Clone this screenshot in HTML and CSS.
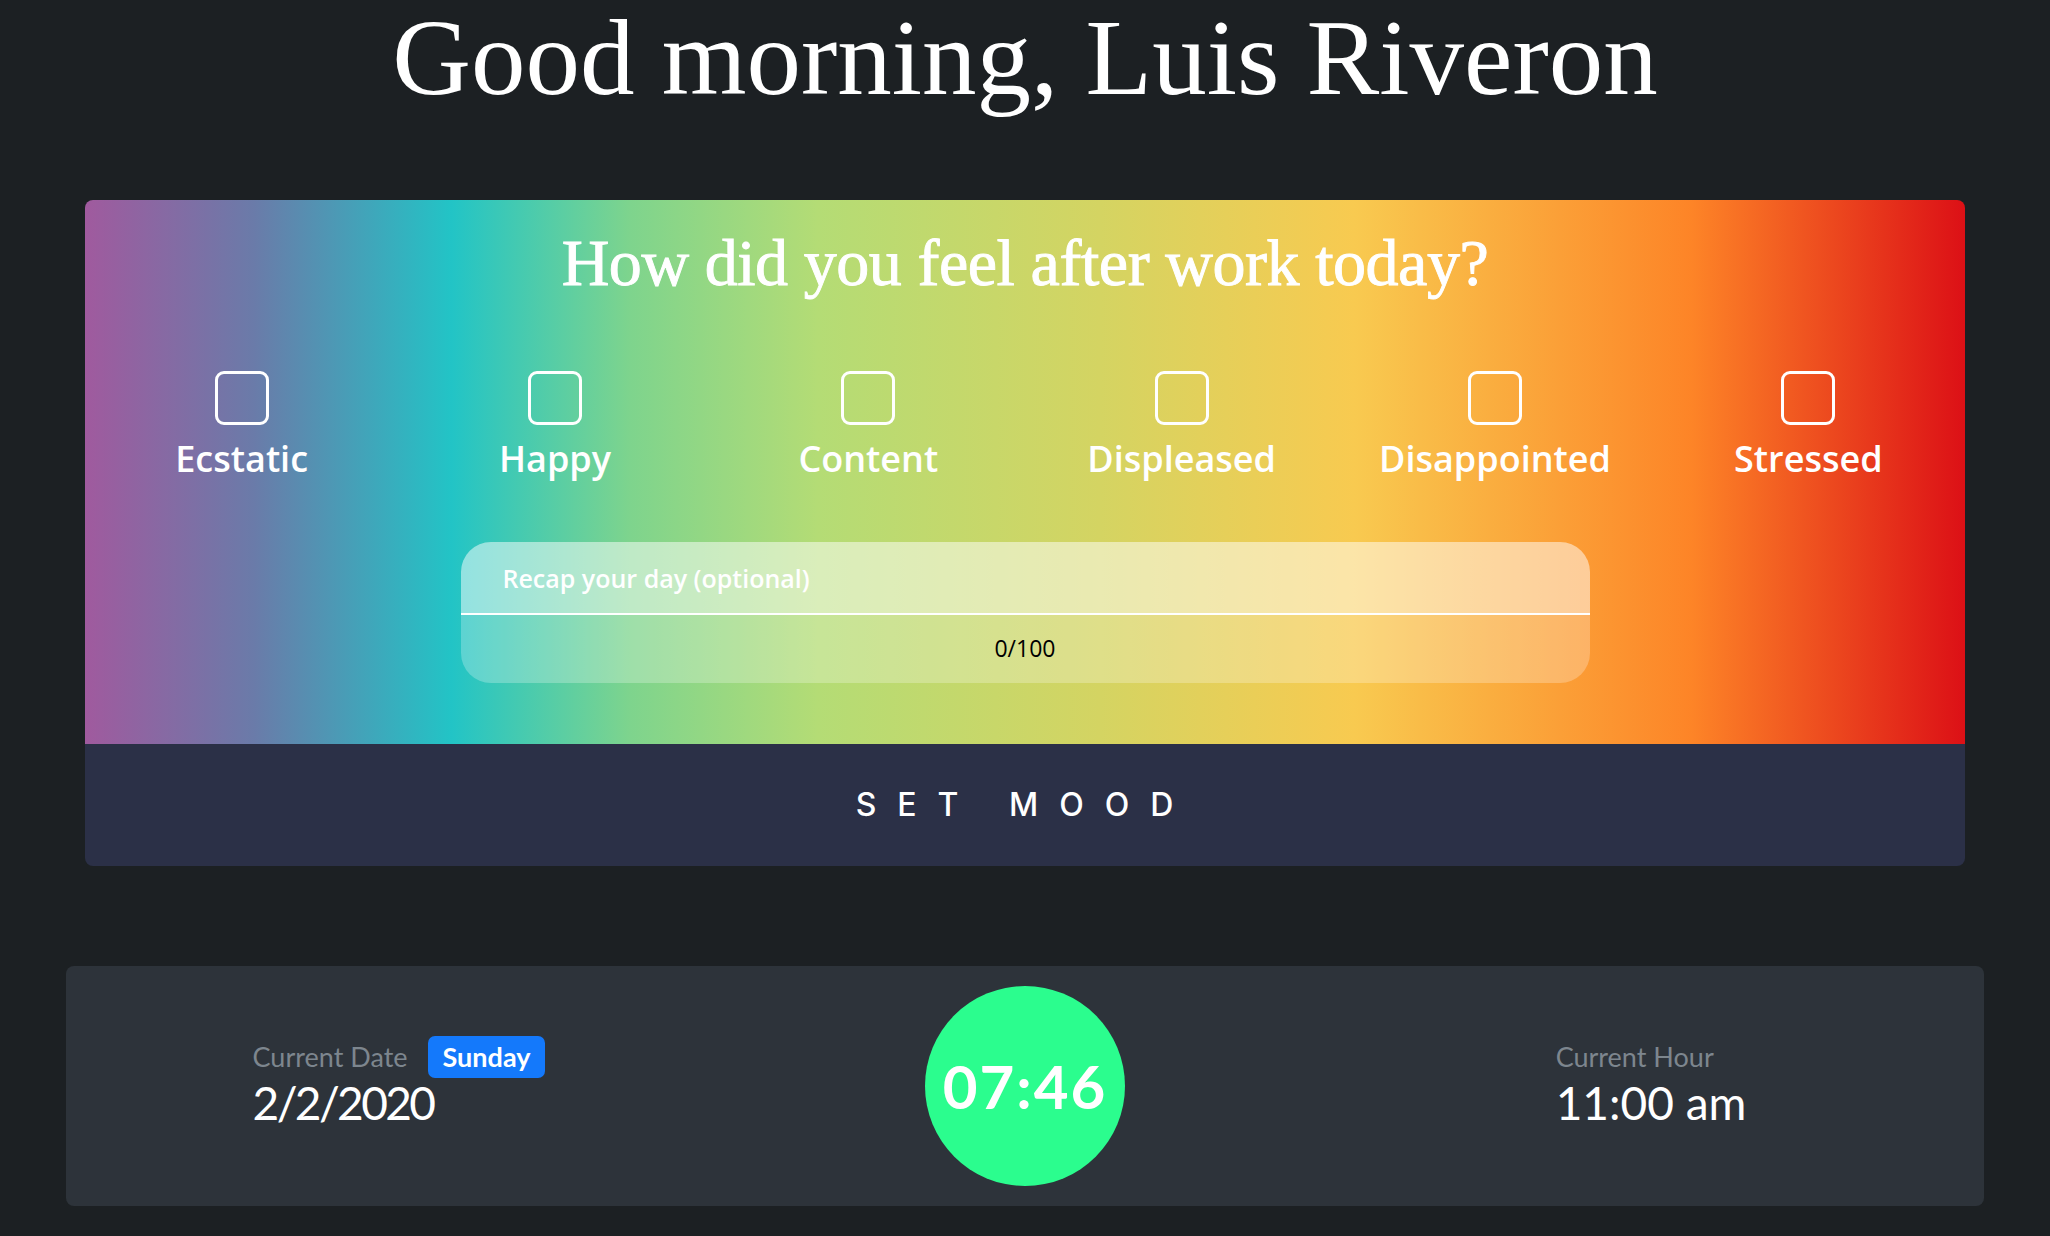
FILE: index.html
```html
<!DOCTYPE html>
<html lang="en">
<head>
<meta charset="utf-8">
<title>Mood</title>
<link rel="stylesheet" href="styles.css">
</head>
<body>
<main class="page">
  <h1 class="greeting">Good morning, Luis Riveron</h1>

  <section class="mood-card">
    <div class="mood-panel">
      <h2 class="mood-question">How did you feel after work today?</h2>
      <div class="mood-options">
        <label class="mood-option"><span class="mood-box"></span><span class="mood-label">Ecstatic</span></label>
        <label class="mood-option"><span class="mood-box"></span><span class="mood-label">Happy</span></label>
        <label class="mood-option"><span class="mood-box"></span><span class="mood-label">Content</span></label>
        <label class="mood-option"><span class="mood-box"></span><span class="mood-label">Displeased</span></label>
        <label class="mood-option"><span class="mood-box"></span><span class="mood-label">Disappointed</span></label>
        <label class="mood-option"><span class="mood-box"></span><span class="mood-label">Stressed</span></label>
      </div>
      <div class="recap">
        <div class="recap-input">Recap your day (optional)</div>
        <div class="recap-count">0/100</div>
      </div>
    </div>
    <button class="set-mood" type="button">SET MOOD</button>
  </section>

  <section class="info-card">
    <div class="info-block">
      <div class="info-label-row">
        <span class="info-label">Current Date</span>
        <span class="badge">Sunday</span>
      </div>
      <div class="info-value date-value">2/2/2020</div>
    </div>
    <div class="clock"><span class="clock-time">07:46</span></div>
    <div class="info-block">
      <div class="info-label-row">
        <span class="info-label">Current Hour</span>
      </div>
      <div class="info-value">11:00 am</div>
    </div>
  </section>
</main>
</body>
</html>
```

FILE: styles.css
```css
html, body {
  margin: 0;
  padding: 0;
  background: #1c2023;
}

.page {
  display: block;
}

.greeting {
  margin: -2px 0 0;
  font-family: "Liberation Serif", serif;
  font-weight: 400;
  font-size: 109px;
  line-height: 1.107;
  color: #ffffff;
  text-align: center;
}

.mood-card {
  width: 1880px;
  margin: 81px auto 0;
  border-radius: 8px;
  overflow: hidden;
}

.mood-panel {
  background: linear-gradient(90deg,
    #a05a9e 0%,
    #6a7ba9 9%,
    #22c4c6 19.5%,
    #7ed48d 29%,
    #b4dc75 39%,
    #d4d462 54%,
    #f8ca50 67.5%,
    #fd8427 85.5%,
    #dc1016 100%);
  padding: 26px 0 61px;
}

.mood-question {
  margin: 0;
  font-family: "Liberation Serif", serif;
  font-weight: 400;
  font-size: 66px;
  line-height: 1.107;
  letter-spacing: -0.45px;
  -webkit-text-stroke: 0.9px #ffffff;
  color: #ffffff;
  text-align: center;
}

.mood-options {
  display: grid;
  grid-template-columns: repeat(6, 1fr);
  margin-top: 72px;
}

.mood-option {
  display: flex;
  flex-direction: column;
  align-items: center;
}

.mood-box {
  display: block;
  width: 54px;
  height: 54px;
  box-sizing: border-box;
  border: 3px solid #ffffff;
  border-radius: 9px;
}

.mood-label {
  margin-top: 9px;
  font-family: "Open Sans", sans-serif;
  font-weight: 600;
  font-size: 36px;
  line-height: 49px;
  color: #ffffff;
}

.recap {
  width: 1129px;
  margin: 59px auto 0;
  border-radius: 30px;
  overflow: hidden;
}

.recap-input {
  height: 73px;
  box-sizing: border-box;
  padding: 21px 42px 0;
  background: rgba(255, 255, 255, 0.5);
  border-bottom: 2px solid #ffffff;
  font-family: "Open Sans", sans-serif;
  font-weight: 600;
  font-size: 25px;
  line-height: 30px;
  color: #ffffff;
}

.recap-count {
  height: 68px;
  box-sizing: border-box;
  padding-top: 20px;
  background: rgba(255, 255, 255, 0.25);
  text-align: center;
  font-family: "Open Sans", sans-serif;
  font-weight: 500;
  font-size: 23px;
  line-height: 27px;
  color: #000000;
}

.set-mood {
  display: block;
  width: 100%;
  height: 122px;
  margin: 0;
  padding: 0;
  border: 0;
  background: #2b3047;
  color: #ffffff;
  font-family: Inter, sans-serif;
  font-weight: 500;
  font-size: 32px;
  letter-spacing: 21px;
  text-align: center;
}

.info-card {
  width: 1918px;
  height: 240px;
  margin: 100px auto 0;
  box-sizing: border-box;
  padding: 0 20px;
  background: #2d333a;
  border-radius: 8px;
  display: grid;
  grid-template-columns: repeat(3, 1fr);
  align-items: center;
  justify-items: center;
}

.info-block {
  margin-bottom: 10px;
}

.info-label-row {
  display: flex;
  align-items: center;
  gap: 20px;
  height: 42px;
}

.info-label {
  font-family: Lato, sans-serif;
  font-weight: 400;
  font-size: 27px;
  color: #7d868e;
}

.badge {
  display: flex;
  align-items: center;
  height: 42px;
  padding: 0 15px;
  border-radius: 7px;
  background: #1479fb;
  color: #ffffff;
  font-family: Lato, sans-serif;
  font-weight: 700;
  font-size: 27px;
}

.info-value {
  margin-top: 2px;
  font-family: Lato, sans-serif;
  font-weight: 400;
  font-size: 46px;
  line-height: 46px;
  color: #ffffff;
}

.date-value {
  letter-spacing: -2.6px;
}

.clock {
  width: 200px;
  height: 200px;
  border-radius: 50%;
  background: #2bfd8e;
  display: flex;
  align-items: center;
  justify-content: center;
}

.clock-time {
  font-family: Lato, sans-serif;
  font-weight: 700;
  font-size: 60px;
  letter-spacing: 2px;
  color: #ffffff;
}
```
